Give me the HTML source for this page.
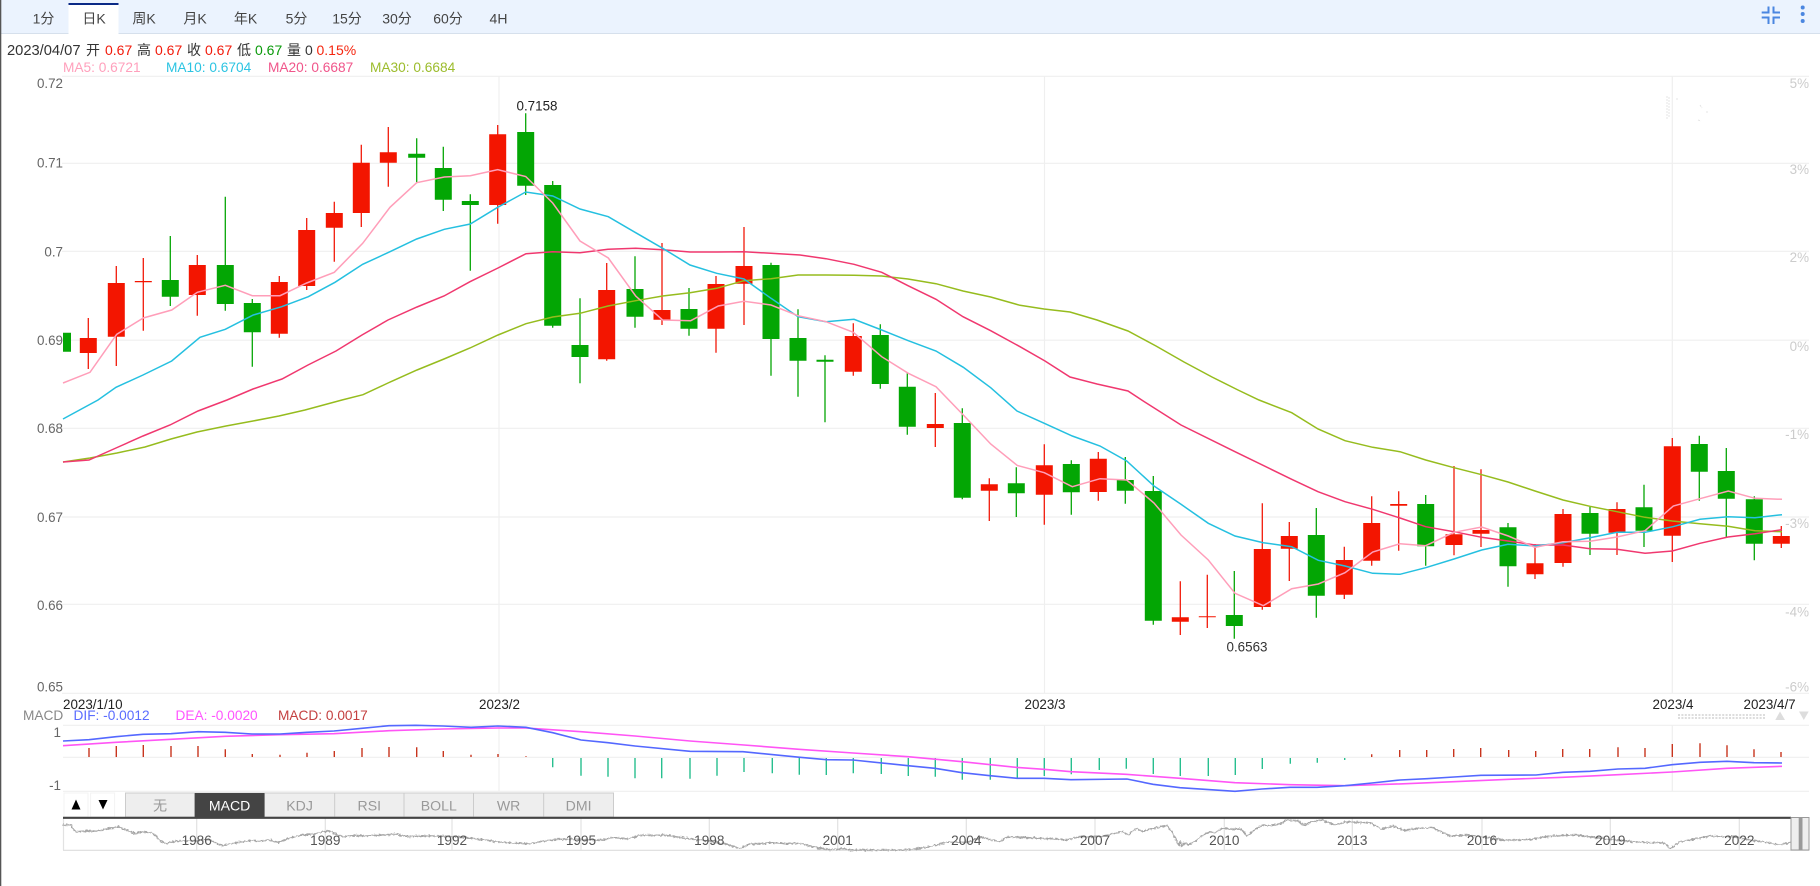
<!DOCTYPE html>
<html lang="zh"><head><meta charset="utf-8"><title>K线图</title>
<style>
html,body{margin:0;padding:0;background:#fff;width:1820px;height:886px;overflow:hidden}
svg{display:block;position:absolute;left:0;top:0}
text{font-family:"Liberation Sans","Noto Sans CJK SC",sans-serif}
.tab{font-size:14px;fill:#444;text-anchor:middle}
.info{font-size:14px;fill:#333}
.r{fill:#f21a0a}.g{fill:#0a9a0a}
.ma{font-size:13.7px}
.yl{font-size:13.4px;fill:#666;text-anchor:end}
.yr{font-size:13.4px;fill:#ccc;text-anchor:end}
.ax{font-size:13.4px;fill:#222}
.btn{font-size:14.1px;fill:#999;text-anchor:middle}
.nav{font-size:13.6px;fill:#555;text-anchor:middle}
</style></head><body>
<svg width="1820" height="886" viewBox="0 0 1820 886" fill="none">
<defs><filter id="j" x="0" y="0" width="1820" height="886" filterUnits="userSpaceOnUse"><feTurbulence type="fractalNoise" baseFrequency="0.45" numOctaves="2" seed="3" result="n"/><feDisplacementMap in="SourceGraphic" in2="n" scale="3.5" xChannelSelector="R" yChannelSelector="G"/></filter></defs>
<rect x="0" y="0" width="1820" height="33" fill="#ebf3fe"/>
<rect x="0" y="33" width="1820" height="1" fill="#d6e0ec"/>
<rect x="68.5" y="3" width="50" height="31" fill="#fff"/>
<rect x="68.5" y="3" width="50" height="2" fill="#0b2a86"/>
<rect x="0" y="0" width="1.3" height="886" fill="#555"/>
<text class="tab" x="43.5" y="23.5">1分</text>
<text class="tab" x="94" y="23.5">日K</text>
<text class="tab" x="144" y="23.5">周K</text>
<text class="tab" x="195" y="23.5">月K</text>
<text class="tab" x="245.5" y="23.5">年K</text>
<text class="tab" x="296.5" y="23.5">5分</text>
<text class="tab" x="347" y="23.5">15分</text>
<text class="tab" x="397" y="23.5">30分</text>
<text class="tab" x="448" y="23.5">60分</text>
<text class="tab" x="498.5" y="23.5">4H</text>
<path d="M1761.7 12.5H1768.5V6.5M1773.5 6.5V12.5H1780M1761.7 17.5H1768.5V24M1780 17.5H1773.5V24" stroke="#4a86e0" stroke-width="2"/>
<circle cx="1802.7" cy="7.5" r="2" fill="#4a86e0"/><circle cx="1802.7" cy="14" r="2" fill="#4a86e0"/><circle cx="1802.7" cy="21" r="2" fill="#4a86e0"/>

<text class="info" x="7" y="55" style="font-size:14.7px">2023/04/07</text>
<text class="info" x="86" y="55">开</text><text class="info r" x="105" y="55">0.67</text>
<text class="info" x="137" y="55">高</text><text class="info r" x="155" y="55">0.67</text>
<text class="info" x="187" y="55">收</text><text class="info r" x="205" y="55">0.67</text>
<text class="info" x="237" y="55">低</text><text class="info g" x="255" y="55">0.67</text>
<text class="info" x="287" y="55">量</text><text class="info" x="305" y="55">0</text>
<text class="info" x="316.5" y="55" style="fill:#f5260f">0.15%</text>
<text class="ma" x="63" y="72" fill="#ffa0bc">MA5: 0.6721</text>
<text class="ma" x="166" y="72" fill="#2cc4e2">MA10: 0.6704</text>
<text class="ma" x="268" y="72" fill="#f0558a">MA20: 0.6687</text>
<text class="ma" x="370" y="72" fill="#9cbc2c">MA30: 0.6684</text>

<path d="M62 76.3H1809M62 163.3H1809M62 251.3H1809M62 340.2H1809M62 428.3H1809M62 517H1809M62 604.3H1809M62 693.3H1809M63 725.3H1809M63 757.3H1809M63 791.3H1809" stroke="#efefef" stroke-width="1.2"/>
<path d="M499 76V693M1044.5 76V693M1672.3 76V693M499 725V791M1044.5 725V791M1672.3 725V791" stroke="#efefef" stroke-width="1.2"/>

<text class="yl" x="63" y="88">0.72</text>
<text class="yl" x="63" y="167.5">0.71</text>
<text class="yl" x="63" y="256.5">0.7</text>
<text class="yl" x="63" y="345">0.69</text>
<text class="yl" x="63" y="433">0.68</text>
<text class="yl" x="63" y="522">0.67</text>
<text class="yl" x="63" y="610">0.66</text>
<text class="yl" x="63" y="691.5">0.65</text>
<text class="yr" x="1809" y="88">5%</text>
<text class="yr" x="1809" y="174">3%</text>
<text class="yr" x="1809" y="262">2%</text>
<text class="yr" x="1809" y="351">0%</text>
<text class="yr" x="1809" y="439">-1%</text>
<text class="yr" x="1809" y="528">-3%</text>
<text class="yr" x="1809" y="616.5">-4%</text>
<text class="yr" x="1809" y="691.5">-6%</text>
<path d="M1667 96V120M1669 97V118M1677 98V101M1700 105L1702 108M1707 111V113M1698 120L1701 121" stroke="#e4e4e4" stroke-width="1" stroke-dasharray="2 1"/>

<!-- wicks -->
<path stroke="#f21a0a" stroke-width="1.3" d="M88.3 318V369M116.3 266V366M143.3 258V330.7M197.3 255V315.7M279.3 276V337.7M306.7 218V290M334.3 201.7V261.7M361.3 144.7V227M388.3 127V186.7M497.7 125V223.7M606.7 263V360.7M662 243V325M716 276V352.7M744 227V325M853.3 323.3V375.7M935.3 393V447M989.3 478.3V521M1044.3 444.3V524.7M1098.3 452V500.7M1180.3 581.3V635M1207.3 574.7V628M1262.3 503.3V609.7M1289.3 522V581M1344.3 546.7V599M1371.7 496.3V565.7M1398.7 491.3V550.7M1454 466V555.3M1481 469.3V547M1535 544V579M1563 509V566.7M1617 502.3V555M1672.3 438V562M1781.3 526V548"/>
<path stroke="#06a606" stroke-width="1.3" d="M170.3 236V306M225.3 196.7V310.7M252.3 299V366.7M416.7 138.3V182.7M443.3 146.7V211M470.3 194.3V270.7M525.7 113.3V195M552.7 181V327.7M580 298.3V383.3M635 256.3V327.7M689 288V335.7M771 262.7V375.7M798 309.3V396.7M825 355.3V422.3M880.3 324.3V388.7M907.3 373.3V434.7M962.3 408.3V499.3M1016.3 467.3V517M1071.3 460.3V514.7M1125.3 457V503.7M1153.3 476V624.7M1234.3 571V638.7M1316.3 508V617.7M1425.7 495V565.7M1508 523V586.7M1590 507V555M1644 484.7V547M1699.3 435.7V500.7M1726.3 448V537.7M1754.3 496.3V560.3"/>
<!-- bodies -->
<path fill="#f31500" d="M79.8 338h17V353h-17zM107.8 283h17V336.7h-17zM134.8 281h17V282.3h-17zM188.8 265h17V295h-17zM270.8 282h17V333.7h-17zM298.2 230h17V286h-17zM325.8 213h17V227.7h-17zM352.8 162.7h17V213h-17zM379.8 152.3h17V162.7h-17zM489.2 134.3h17V205h-17zM598.2 290h17V359.3h-17zM653.5 310h17V319.7h-17zM707.5 284h17V328.7h-17zM735.5 266h17V283.7h-17zM844.8 336h17V371.7h-17zM926.8 424h17V428h-17zM980.8 484.3h17V490.7h-17zM1035.8 465.3h17V494.7h-17zM1089.8 458.7h17V492h-17zM1171.8 617.3h17V621.7h-17zM1198.8 616.3h17V617.3h-17zM1253.8 549h17V607h-17zM1280.8 536h17V548.7h-17zM1335.8 560h17V594.7h-17zM1363.2 523h17V560.7h-17zM1390.2 504h17V505.7h-17zM1445.5 534.3h17V545h-17zM1472.5 530h17V533.7h-17zM1526.5 563.3h17V574.3h-17zM1554.5 514h17V563h-17zM1608.5 509h17V532.7h-17zM1663.8 446.3h17V535.7h-17zM1772.8 536h17V543.7h-17z"/>
<path fill="#03a604" d="M63 332.7h8V351.7h-8zM161.8 280h17V296.7h-17zM216.8 265h17V304h-17zM243.8 303h17V332.3h-17zM408.2 153.7h17V157.7h-17zM434.8 168h17V199.7h-17zM461.8 201h17V205h-17zM517.2 132h17V185.7h-17zM544.2 185h17V325.7h-17zM571.5 345h17V357h-17zM626.5 289h17V316.7h-17zM680.5 309h17V328.7h-17zM762.5 265h17V339h-17zM789.5 338h17V360.7h-17zM816.5 359.7h17V361.7h-17zM871.8 335h17V384h-17zM898.8 386.7h17V426.7h-17zM953.8 423h17V497.7h-17zM1007.8 483.3h17V493.3h-17zM1062.8 464h17V492.3h-17zM1116.8 480h17V490.7h-17zM1144.8 491h17V620.7h-17zM1225.8 615h17V626h-17zM1307.8 535h17V595.7h-17zM1417.2 504h17V546.3h-17zM1499.5 527.3h17V566.3h-17zM1581.5 513h17V533.7h-17zM1635.5 507.3h17V530.7h-17zM1690.8 444h17V471.7h-17zM1717.8 471h17V498.7h-17zM1745.8 499.3h17V543.7h-17z"/>
<!-- MA30 -->
<polyline stroke="#96bc1e" stroke-width="1.5" points="63,462 90,458 117,453 145,447 171,439 197,432 226,426 253,421 279,416 305,410 342,400 363,394.7 388,383 417,370 444,359 470,348 498,335 526,323.7 552.7,317 580,313.3 608,306 635.7,300.7 662.7,296 690,292.7 716.7,288.3 744,280.7 771,278.7 798,275 826,275 854,275.3 881.7,276 908,279 936,283.7 963,291 990.7,297 1020,305.3 1044,309 1070,312 1097,320 1128,331 1156,346 1184,362 1212,377 1238,390 1259,400 1291.7,412.7 1318,429 1345,440.7 1372.7,447.3 1400,451.7 1425.7,460 1454,467.7 1481.7,474.7 1508,482 1535,491 1563,500 1590,506.3 1617,511.7 1645,517.3 1672.3,521 1700,523.7 1728,526.3 1755,530.7 1782,531.7"/>
<!-- MA20 -->
<polyline stroke="#f0386f" stroke-width="1.5" points="63,462 89,460 116,448 143,436 170,425 198,411 227,400 253,389 282,379 308,365 336,351 362,335 388,320 417,307 444,296 470,281.7 498,268 526,253.7 552.7,251.7 580,252.7 608,249.3 635.7,248.3 662.7,249.7 690,252 716.7,252 744,251.7 771,253.3 800,255 826,258.7 854,264.3 881.7,272.3 908,285.7 936,299.3 963,316.7 990.7,330.7 1020,346.7 1045,361 1070,377 1097,384 1128,391 1141.7,400 1181,425 1235,451.7 1291.7,479.3 1318,491.7 1345,501.7 1372.7,509.3 1400,518 1425.7,526.7 1454,531.7 1481.7,537.3 1508,541 1535,545 1563,545 1590,548.7 1617,549.3 1645,553.3 1672.3,551 1700,543.3 1728,537 1755,533.7 1782,529.7"/>
<!-- MA10 -->
<polyline stroke="#25c0e0" stroke-width="1.5" points="63,419 98,400 116,387.3 143,375 171.7,361 200,337.3 225.3,329.3 253.3,315 281.7,306.7 308.3,296.7 335,282.3 362.7,264.3 390,251.7 416.7,239 444.3,229.3 470.3,224 497.7,207.3 525.7,192 552.7,196 580,209 608.3,216.7 635.7,232.7 662.7,248.3 690,265 716.7,273.3 744,279 771,298.3 798,316.7 826,321.7 854,319.3 881.7,330 908.3,340.7 936,351 963.3,367.3 990.7,387.7 1017,411 1044.3,423.3 1072.3,436 1100,446 1126.7,461 1154,486 1181,504.3 1208.3,523.3 1235,536 1263.3,542.7 1291.7,546.7 1318.3,560.3 1345,566 1372.7,573.3 1400,574.3 1425.7,567.7 1454,559 1481.7,550 1508,544.3 1535,546 1563,542.7 1590,537.7 1617,532.3 1645,532.3 1673,526.7 1700,519.3 1728,516.7 1755,517.7 1782,514.7"/>
<!-- MA5 -->
<polyline stroke="#ff9eb9" stroke-width="1.5" points="63,383 90,372.3 116.7,334.3 143.3,318 171.7,310 197.3,292.3 225.3,285.3 252.3,295.7 280,295.7 306.7,283 334.3,272.3 362.7,243.3 390,207.3 416.7,182.7 444.3,177 470.3,175.7 497.7,169.7 525.7,176.5 552.7,203 580,241 608.3,258 635.7,296 662.7,320 690.7,320.7 718.3,306 744,301.3 771,305 798,315.7 826,321.7 853.3,332.3 881.7,356.7 908.3,373.3 936,386.7 963.3,415 990.7,444 1017.3,465.5 1044.3,472.7 1072.3,486.7 1100,478.7 1126.7,480 1154,503 1181,535 1208.3,560 1235,593.3 1263.3,605.7 1291.7,588.7 1318.3,584 1345,572.7 1372.7,552 1400,543.7 1425.7,545.7 1454,532.3 1481.7,527 1508.3,536 1535,547.3 1563,541.7 1590,541.3 1617,537 1645,530.7 1673.3,506 1700,498.7 1728.3,491 1755,498.3 1782,499.3"/>

<text x="537" y="110.5" text-anchor="middle" style="font-size:13.4px;fill:#222">0.7158</text>
<text x="1247" y="651.5" text-anchor="middle" style="font-size:13.4px;fill:#333">0.6563</text>

<text class="ax" x="63" y="709">2023/1/10</text>
<text class="ax" x="499.5" y="709" text-anchor="middle">2023/2</text>
<text class="ax" x="1045" y="709" text-anchor="middle">2023/3</text>
<text class="ax" x="1673" y="709" text-anchor="middle">2023/4</text>
<text class="ax" x="1743.5" y="709">2023/4/7</text>
<path d="M1678 715H1765M1678 718H1765" stroke="#ddd" stroke-width="2" stroke-dasharray="2 1.4"/>
<path d="M1780 711.5L1785 720H1775.3zM1799 711.5H1808.7L1803.8 720z" fill="#ddd"/>

<text class="ma" x="23" y="720" fill="#888">MACD</text>
<text class="ma" x="73.5" y="720" fill="#5a6cff">DIF: -0.0012</text>
<text class="ma" x="175.5" y="720" fill="#ff55ff">DEA: -0.0020</text>
<text class="ma" x="278" y="720" fill="#c44040">MACD: 0.0017</text>
<text class="yl" x="61" y="737">1</text>
<text class="yl" x="61" y="790">-1</text>

<path stroke="#c8351e" stroke-width="1.4" d="M89 757V748M116.3 757V746M143.3 757V745M171 757V746M198 757V746M225.3 757V749.3M252.3 757V754M280 757V754.7M307 757V752.7M334.3 757V751M362 757V748M389 757V747M416.7 757V747.3M443.3 757V751M471 757V754.7M498 757V754M526 757V756.2M1371.7 757V754.3M1399.7 757V750M1426.7 757V750M1453.7 757V749M1480.7 757V748M1508.7 757V750M1535.7 757V751M1562.7 757V749M1589.7 757V749M1618 757V747.3M1645 757V748M1672.3 757V744M1700 757V743.3M1727 757V745.3M1754 757V749.3M1781 757V752"/>
<path stroke="#28bf8f" stroke-width="1.4" d="M552.7 758V767.3M581 758V775.7M608 758V776.7M635 758V778.3M661.7 758V778.3M690 758V778.7M717 758V775.7M744 758V772M772.3 758V773.3M799.3 758V774.7M826.3 758V775M853.3 758V773.3M881.3 758V774M908.3 758V776M935.3 758V776.7M962.3 758V779.7M990.3 758V779.7M1017.3 758V779M1044.3 758V776M1071.3 758V774.3M1099.3 758V770M1126.3 758V768.7M1153.3 758V774M1180.3 758V776M1208.3 758V776M1235.3 758V775M1262.3 758V769M1290.3 758V763.7M1317.3 758V762.7M1344.7 758V760"/>
<polyline stroke="#ff55f5" stroke-width="1.6" points="63,745.7 116,742.3 171,739.3 225,736.3 280,734.7 334,733.7 389,730.7 443,729 498,728 526,728 553,729.8 581,731.7 635,736 690,741 744,745 799,749.3 853,753 908,756.7 962,761.7 1017,767.4 1044,769.3 1071,771.7 1126,774.3 1180,778.3 1235,782.7 1290,784.7 1345,785.7 1400,783.9 1454,781.7 1509,779.3 1563,777.3 1618,774.7 1672,772 1727,768.3 1782,766.3"/>
<polyline stroke="#5468ff" stroke-width="1.6" points="63,741 89,739.7 116,736.7 143,734.3 171,733.7 198,731.7 225,732.3 252,734 280,734 307,732.3 334,731 362,728.3 389,725.7 416,725.3 443,726 471,727.3 498,726 526,727.3 552.7,732.7 581,740 608,742.7 635,746 690,751.3 743,751.7 800,757.3 826.7,759.7 853,760 908,765.7 935,768.3 962,772.7 990,775.7 1017,778.3 1044,778.3 1071,779.7 1127,779 1153,784.3 1180,787.7 1235,791.3 1262,789 1290,787.3 1317,787.3 1345,785.7 1372,783 1400,780 1427,778.7 1454,777 1481,775.3 1536,775 1563,772.3 1590,771.3 1618,769 1645,768.3 1672,764.7 1700,762.3 1727,761.3 1754,762.7 1782,763"/>

<!-- bottom controls -->
<rect x="64" y="793" width="24" height="24" fill="#fff" stroke="#f3f3f3"/>
<rect x="90.6" y="793" width="24" height="24" fill="#fff" stroke="#f3f3f3"/>
<path d="M76 799.5L80.5 809.5H71.5zM98.5 800H107.5L103 809.5z" fill="#000"/>
<rect x="125.5" y="793" width="488" height="24" fill="#eee" stroke="#ccc" stroke-width="1"/>
<path d="M194.7 793V817M264.5 793V817M334.7 793V817M404 793V817M473.5 793V817M543.7 793V817" stroke="#ccc"/>
<rect x="194.7" y="793" width="69.8" height="24" fill="#444"/>
<text class="btn" x="160" y="810.5">无</text>
<text class="btn" x="229.6" y="810.5" style="fill:#fff">MACD</text>
<text class="btn" x="299.6" y="810.5">KDJ</text>
<text class="btn" x="369.3" y="810.5">RSI</text>
<text class="btn" x="438.8" y="810.5">BOLL</text>
<text class="btn" x="508.6" y="810.5">WR</text>
<text class="btn" x="578.6" y="810.5">DMI</text>

<!-- navigator -->
<path d="M63.5 818V850M196.7 818V850M325.3 818V850M452 818V850M581 818V850M709.3 818V850M837.7 818V850M966.3 818V850M1095 818V850M1224.3 818V850M1352.3 818V850M1482 818V850M1610.3 818V850M1739.3 818V850" stroke="#e2e2e2" stroke-width="1.2"/>
<path d="M63 850.3H1809" stroke="#ddd" stroke-width="1.2"/>
<polyline filter="url(#j)" stroke="#a6a6a6" stroke-width="1.4" stroke-linejoin="round" points="63,825 71.4,825 73,829 76,831.7 86,831 98,831 108,828.5 118.4,826.7 126,830 134.7,833.3 143,832 151,832.7 156,836 160,840.7 165.3,843.3 172,842 181.6,840.7 195,841 208,839.3 216,843 222.4,845.7 235,843 249,840.7 260,841 269.4,840 277.6,842.3 290,838 302,835 314,834 322,832 328.6,830.7 336,834 343,836.7 355,835.5 367,836 382,835 396,834 408,836.7 420,836 432.6,836 450,836.5 465,837.3 485,840 502,842.3 515,843 528.6,844 545,840.7 560,839.3 576.7,839.3 590,840 603,840 613,837.3 628,839 640,835.3 652,835.5 665,835 675,836.7 693,839.3 708,841 723,843.3 732,846 740,848.3 750,844 760,844 770,842.7 785,843.5 800,843.3 816.7,847.7 830,849.7 843,848.7 850,850 900,850 913,849.3 925,847.5 936.7,845 946.7,842.3 966.7,842.3 981.7,837.3 992,840 1000,841.5 1008,836.7 1025,837.5 1040,838.3 1055,839 1066.7,840 1080,836.7 1100,836.7 1112,834 1123,831.7 1128,835 1136.7,828.3 1143,831.7 1150,829 1158,827.5 1166.7,825.3 1170,829 1173,833.3 1176,840 1179,846 1180,841 1182,847 1185,842 1188,845 1191.7,843.3 1197,840 1203,835 1210,832 1215,833 1221.7,828.3 1228,829 1241.7,829.3 1246,836 1248,835 1254,830 1263,825 1272,825.5 1280,824 1286.7,820 1298,820.7 1302,824 1305,825 1311,822 1321.7,820 1335,825 1346.7,821.7 1358,822.5 1370,822.7 1381.7,829.3 1393,826 1405,830.7 1412,829 1431.7,827.3 1440,831 1450,836 1466.7,835 1481.7,836.7 1503,840 1517,840 1531.7,839.3 1545,837 1556.7,835.7 1576.7,835 1595,837.5 1610,839.3 1633,841.7 1650,842.5 1663,842.7 1670.7,848.3 1680,841.7 1695,839 1710,836 1733,836.7 1753,840.7 1765,842 1780,845 1790.7,842.3"/>
<path d="M63 817.8H1791" stroke="#444" stroke-width="2.2"/>
<text class="nav" x="196.7" y="845">1986</text>
<text class="nav" x="325.3" y="845">1989</text>
<text class="nav" x="452" y="845">1992</text>
<text class="nav" x="581" y="845">1995</text>
<text class="nav" x="709.3" y="845">1998</text>
<text class="nav" x="837.7" y="845">2001</text>
<text class="nav" x="966.3" y="845">2004</text>
<text class="nav" x="1095" y="845">2007</text>
<text class="nav" x="1224.3" y="845">2010</text>
<text class="nav" x="1352.3" y="845">2013</text>
<text class="nav" x="1482" y="845">2016</text>
<text class="nav" x="1610.3" y="845">2019</text>
<text class="nav" x="1739.3" y="845">2022</text>
<rect x="1791" y="817.5" width="11" height="32.5" fill="#eee" stroke="#999"/>
<rect x="1802" y="817.5" width="7" height="32.5" fill="#eee" stroke="#999"/>
<rect x="1798.7" y="818" width="3.3" height="32" fill="#999"/>
</svg>
</body></html>
